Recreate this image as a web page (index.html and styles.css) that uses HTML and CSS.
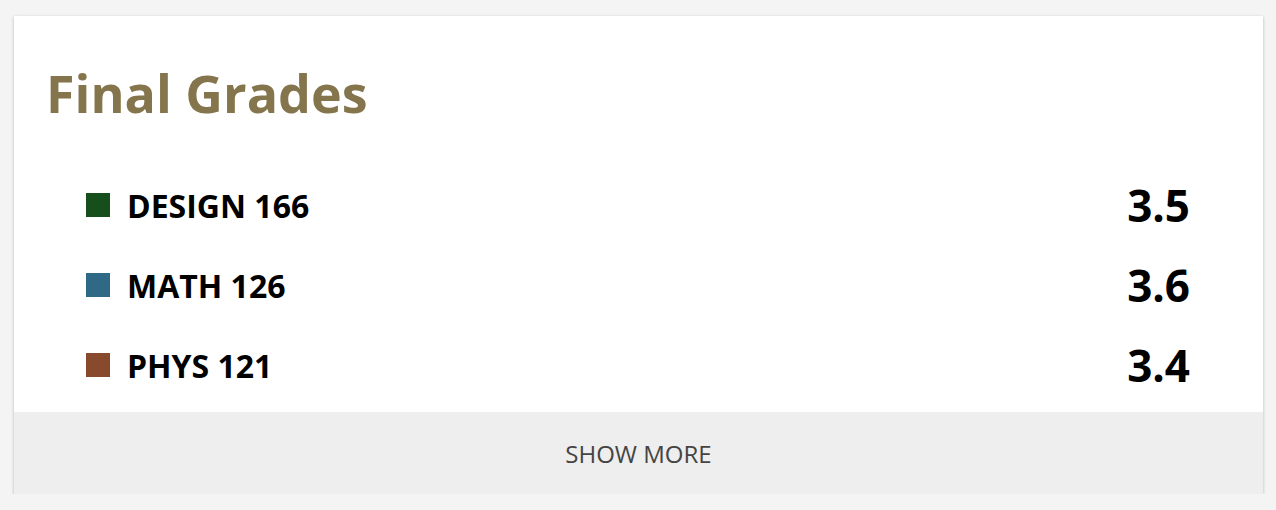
FILE: index.html
```html
<!DOCTYPE html>
<html lang="en">
<head>
    <meta charset="UTF-8">
    <meta name="viewport" content="width=device-width, initial-scale=1.0">
    <title>Final Grades</title>
    <link rel="stylesheet" href="styles.css">
</head>
<body>

<div class="card">
    <h1 class="card-title">Final Grades</h1>
    <ul class="grades">
        <li class="grade-row">
            <span class="swatch swatch-design"></span>
            <span class="course">DESIGN 166</span>
            <span class="grade">3.5</span>
        </li>
        <li class="grade-row">
            <span class="swatch swatch-math"></span>
            <span class="course">MATH 126</span>
            <span class="grade">3.6</span>
        </li>
        <li class="grade-row">
            <span class="swatch swatch-phys"></span>
            <span class="course">PHYS 121</span>
            <span class="grade">3.4</span>
        </li>
    </ul>
    <div class="show-more">SHOW MORE</div>
</div>

</body>
</html>
```

FILE: styles.css
```css
body {
    font-family: "Open Sans", "Liberation Sans", sans-serif;
    background-color: #f4f4f4;
    margin: 0;
    padding: 16px 13px 0 14px;
}
.card {
    background-color: white;
    box-shadow: 0 1px 3px rgba(0, 0, 0, 0.25);
}
.card-title {
    margin: 0;
    padding: 45px 32px 0 32px;
    font-size: 52px;
    font-weight: 700;
    line-height: 64px;
    color: #85754d;
}
.grades {
    list-style: none;
    margin: 0;
    padding: 40px 73px 7px 72px;
}
.grade-row {
    display: flex;
    align-items: center;
    height: 80px;
}
.swatch {
    width: 24px;
    height: 24px;
    margin-right: 17px;
}
.swatch-design {
    background-color: #174f1c;
}
.swatch-math {
    background-color: #2f6986;
}
.swatch-phys {
    background-color: #874a2d;
}
.course {
    flex: 1;
    font-size: 32px;
    font-weight: 700;
    color: #000;
}
.grade {
    font-size: 44px;
    font-weight: 700;
    color: #000;
}
.show-more {
    background-color: #eeeeee;
    height: 82px;
    display: flex;
    justify-content: center;
    align-items: center;
    font-size: 24px;
    color: #444;
}
```
